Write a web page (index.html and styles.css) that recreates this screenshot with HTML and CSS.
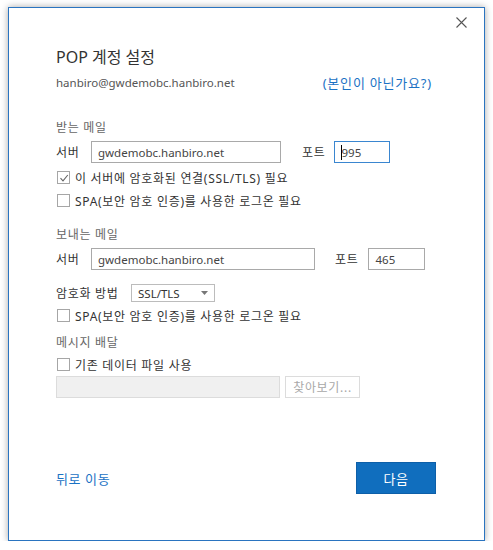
FILE: index.html
```html
<!DOCTYPE html>
<html lang="ko">
<head>
    <meta charset="UTF-8">
    <meta name="viewport" content="width=device-width, initial-scale=1.0">
    <title>POP 계정 설정</title>
    <link rel="stylesheet" href="styles.css">
</head>
<body>
    <div class="dialog">
        <button class="close" aria-label="닫기">
            <svg width="11" height="11" viewBox="0 0 11 11">
                <path d="M0.5 0.5 L10.5 10.5 M10.5 0.5 L0.5 10.5" stroke="#555" stroke-width="1.1" fill="none"/>
            </svg>
        </button>

        <div class="content">
            <h1 class="title">POP 계정 설정</h1>
            <div class="account-row">
                <span class="email">hanbiro@gwdemobc.hanbiro.net</span>
                <a class="link" href="#">(본인이 아닌가요?)</a>
            </div>

            <!-- Incoming mail -->
            <div class="section-label first">받는 메일</div>
            <div class="field-row">
                <span class="field-label">서버</span>
                <input class="text-input server-in" type="text" value="gwdemobc.hanbiro.net">
                <span class="port-label in">포트</span>
                <div class="text-input port-in focused"><span class="caret"></span>995</div>
            </div>
            <label class="check-row top-gap">
                <span class="checkbox checked">
                    <svg width="10" height="10" viewBox="0 0 10 10">
                        <path d="M1.5 5.2 L4 7.8 L8.8 2" stroke="#666" stroke-width="1.1" fill="none"/>
                    </svg>
                </span>
                이 서버에 암호화된 연결(SSL/TLS) 필요
            </label>
            <label class="check-row">
                <span class="checkbox"></span>
                SPA(보안 암호 인증)를 사용한 로그온 필요
            </label>

            <!-- Outgoing mail -->
            <div class="section-label second">보내는 메일</div>
            <div class="field-row">
                <span class="field-label">서버</span>
                <input class="text-input server-out" type="text" value="gwdemobc.hanbiro.net">
                <span class="port-label out">포트</span>
                <input class="text-input port-out" type="text" value="465">
            </div>
            <div class="select-row">
                <span class="select-label">암호화 방법</span>
                <div class="select">
                    <span>SSL/TLS</span>
                    <svg width="7" height="4" viewBox="0 0 7 4"><path d="M0 0 L7 0 L3.5 4 Z" fill="#777"/></svg>
                </div>
            </div>
            <label class="check-row">
                <span class="checkbox"></span>
                SPA(보안 암호 인증)를 사용한 로그온 필요
            </label>

            <!-- Delivery -->
            <div class="section-label third">메시지 배달</div>
            <label class="check-row small-gap">
                <span class="checkbox"></span>
                기존 데이터 파일 사용
            </label>
            <div class="file-row">
                <div class="file-input"></div>
                <button class="browse" disabled>찾아보기...</button>
            </div>

            <div class="footer">
                <a class="link back" href="#">뒤로 이동</a>
                <button class="next">다음</button>
            </div>
        </div>
    </div>
</body>
</html>
```

FILE: styles.css
```css
body {
    margin: 0;
    padding: 0;
    background-color: #ffffff;
    font-family: "Noto Sans", "Noto Sans CJK KR", sans-serif;
    font-size: 12px;
    color: #333333;
}

.dialog {
    position: relative;
    width: 477px;
    height: 534px;
    margin: 7px 0 0 8px;
    box-sizing: border-box;
    border: 1px solid #2a74c0;
    background-color: #ffffff;
    box-shadow: 0 0 7px rgba(0, 0, 0, 0.35);
}

.close {
    position: absolute;
    top: 9px;
    right: 17px;
    padding: 0;
    border: none;
    background: none;
    line-height: 0;
    cursor: pointer;
}

.content {
    padding: 37px 0 0 47px;
}

.title {
    margin: 0;
    font-size: 16px;
    font-weight: normal;
    line-height: 24px;
    color: #333333;
}

.account-row {
    display: flex;
    align-items: center;
    width: 376px;
    height: 16px;
    margin-top: 5px;
}

.email {
    font-size: 11.5px;
    color: #555555;
}

.link {
    margin-left: auto;
    font-size: 13px;
    letter-spacing: 0.8px;
    color: #1b72c4;
    text-decoration: none;
}

/* Korean labels render a bit wider in the original dialog */
.section-label,
.field-label,
.port-label,
.check-row,
.select-label,
.browse {
    letter-spacing: 0.7px;
}

.section-label {
    line-height: 16px;
    color: #666666;
}

.section-label.first { margin-top: 30px; }
.section-label.second { margin-top: 15px; }
.section-label.third { margin-top: 8px; }

.field-row {
    display: flex;
    align-items: center;
    height: 22px;
    margin-top: 5px;
}

.field-label {
    width: 35px;
}

.text-input {
    box-sizing: border-box;
    height: 22px;
    margin: 0;
    padding: 0 6px;
    border: 1px solid #a9a9a9;
    font-family: inherit;
    font-size: 11.5px;
    color: #444444;
    background-color: #ffffff;
    outline: none;
}

.server-in { width: 190px; }
.server-out { width: 224px; }

.port-label.in { margin: 0 9px 0 21px; }
.port-label.out { margin: 0 10px 0 20px; }

.port-in {
    display: flex;
    align-items: center;
    width: 56px;
    padding-left: 6px;
}

.port-out { width: 57px; }

.focused {
    border-color: #3a86d0;
}

.caret {
    width: 1px;
    height: 15px;
    background-color: #000000;
    margin-right: -1px;
}

.check-row {
    display: flex;
    align-items: center;
    height: 23px;
    color: #333333;
}

.check-row.top-gap { margin-top: 3px; }
.check-row.small-gap { margin-top: 2px; }

.checkbox {
    display: flex;
    align-items: center;
    justify-content: center;
    box-sizing: border-box;
    width: 13px;
    height: 13px;
    margin: 0 5px 0 1px;
    border: 1px solid #a6a6a6;
    background-color: #ffffff;
}

.select-row {
    display: flex;
    align-items: center;
    height: 22px;
    margin-top: 12px;
}

.select-label {
    width: 75px;
}

.select {
    display: flex;
    align-items: center;
    justify-content: space-between;
    box-sizing: border-box;
    width: 84px;
    height: 18px;
    padding: 0 6px 0 6px;
    border: 1px solid #bcbcbc;
    font-size: 11.5px;
    color: #333333;
}

.file-row {
    display: flex;
    align-items: center;
    gap: 5px;
}

.file-input {
    box-sizing: border-box;
    width: 224px;
    height: 22px;
    border: 1px solid #dcdcdc;
    background-color: #f0f0f0;
}

.browse {
    box-sizing: border-box;
    width: 75px;
    height: 22px;
    padding: 0;
    border: 1px solid #dcdcdc;
    background-color: #ffffff;
    font-family: inherit;
    font-size: 12px;
    color: #a8a8a8;
}

.footer {
    display: flex;
    align-items: center;
    justify-content: space-between;
    width: 380px;
    margin-top: 64px;
}

.back {
    margin-left: 0;
    font-size: 13px;
    letter-spacing: 0.6px;
}

.next {
    width: 80px;
    height: 32px;
    border: 1px solid #0d5fa8;
    background-color: #106ebe;
    color: #ffffff;
    font-family: inherit;
    font-size: 13px;
    letter-spacing: 0.5px;
    cursor: pointer;
}
```
